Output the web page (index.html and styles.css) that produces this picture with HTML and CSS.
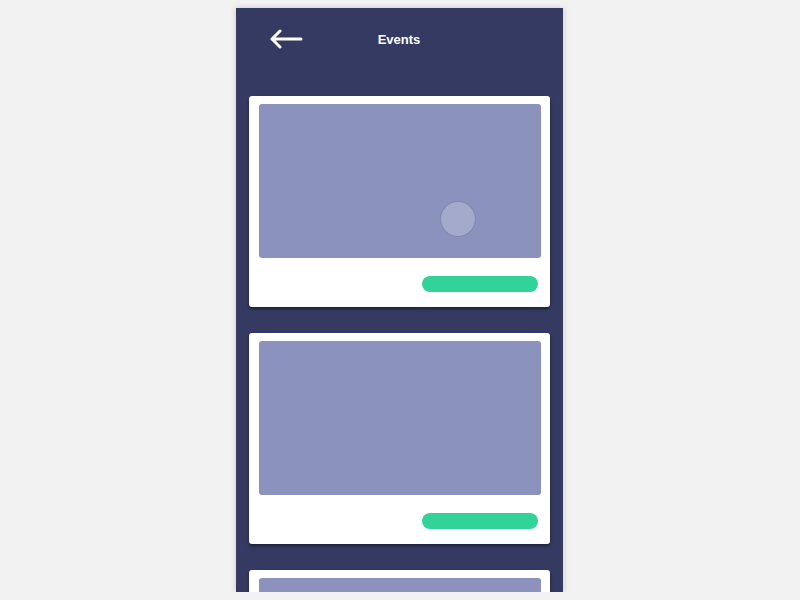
FILE: index.html
```html
<!DOCTYPE html>
<html lang="en">
<head>
  <meta charset="UTF-8">
  <meta name="viewport" content="width=device-width, initial-scale=1.0">
  <title>Events</title>
  <link rel="stylesheet" href="styles.css">
</head>
<body>
  <div class="phone">
    <header class="topbar">
      <svg class="back" width="34" height="20" viewBox="0 0 34 20">
        <path d="M3 10 H32 M11 2 L3 10 L11 18" fill="none" stroke="#fff" stroke-width="3" stroke-linecap="round" stroke-linejoin="round"/>
      </svg>
      <h1>Events</h1>
    </header>

    <div class="list">
      <div class="card">
        <div class="thumb">
          <span class="touch"></span>
        </div>
        <div class="card-foot"><span class="pill"></span></div>
      </div>
      <div class="card">
        <div class="thumb"></div>
        <div class="card-foot"><span class="pill"></span></div>
      </div>
      <div class="card">
        <div class="thumb"></div>
        <div class="card-foot"><span class="pill"></span></div>
      </div>
    </div>
  </div>
</body>
</html>
```

FILE: styles.css
```css
body {
  margin: 0;
  background: #f2f2f2;
  font-family: "Liberation Sans", Arial, sans-serif;
}
.phone {
  width: 327px;
  height: 584px;
  margin: 8px 0 0 236px;
  background: #343a61;
  overflow: hidden;
  box-shadow: 0 0 6px rgba(0, 0, 0, 0.18);
}
.topbar {
  position: relative;
  height: 62px;
  display: flex;
  align-items: center;
  justify-content: center;
}
.back {
  position: absolute;
  left: 33px;
  top: 21px;
}
.topbar h1 {
  margin: 0;
  color: #fff;
  font-size: 13px;
  font-weight: bold;
  padding-right: 1px;
}
.list {
  padding: 26px 13px 0;
  display: flex;
  flex-direction: column;
  gap: 26px;
}
.card {
  background: #fff;
  border-radius: 3px;
  padding: 8px 9px 0 10px;
  box-shadow: 0 2px 3px rgba(10, 12, 30, 0.55);
  flex-shrink: 0;
}
.thumb {
  position: relative;
  height: 154px;
  background: #8a92bd;
  border-radius: 3px;
}
.touch {
  position: absolute;
  left: 181px;
  top: 97px;
  width: 34px;
  height: 34px;
  border-radius: 50%;
  background: rgba(255, 255, 255, 0.22);
  border: 1px solid rgba(90, 96, 140, 0.45);
}
.card-foot {
  display: flex;
  justify-content: flex-end;
  padding: 18px 3px 15px 0;
}
.pill {
  width: 116px;
  height: 16px;
  border-radius: 8px;
  background: #32d399;
}
```
